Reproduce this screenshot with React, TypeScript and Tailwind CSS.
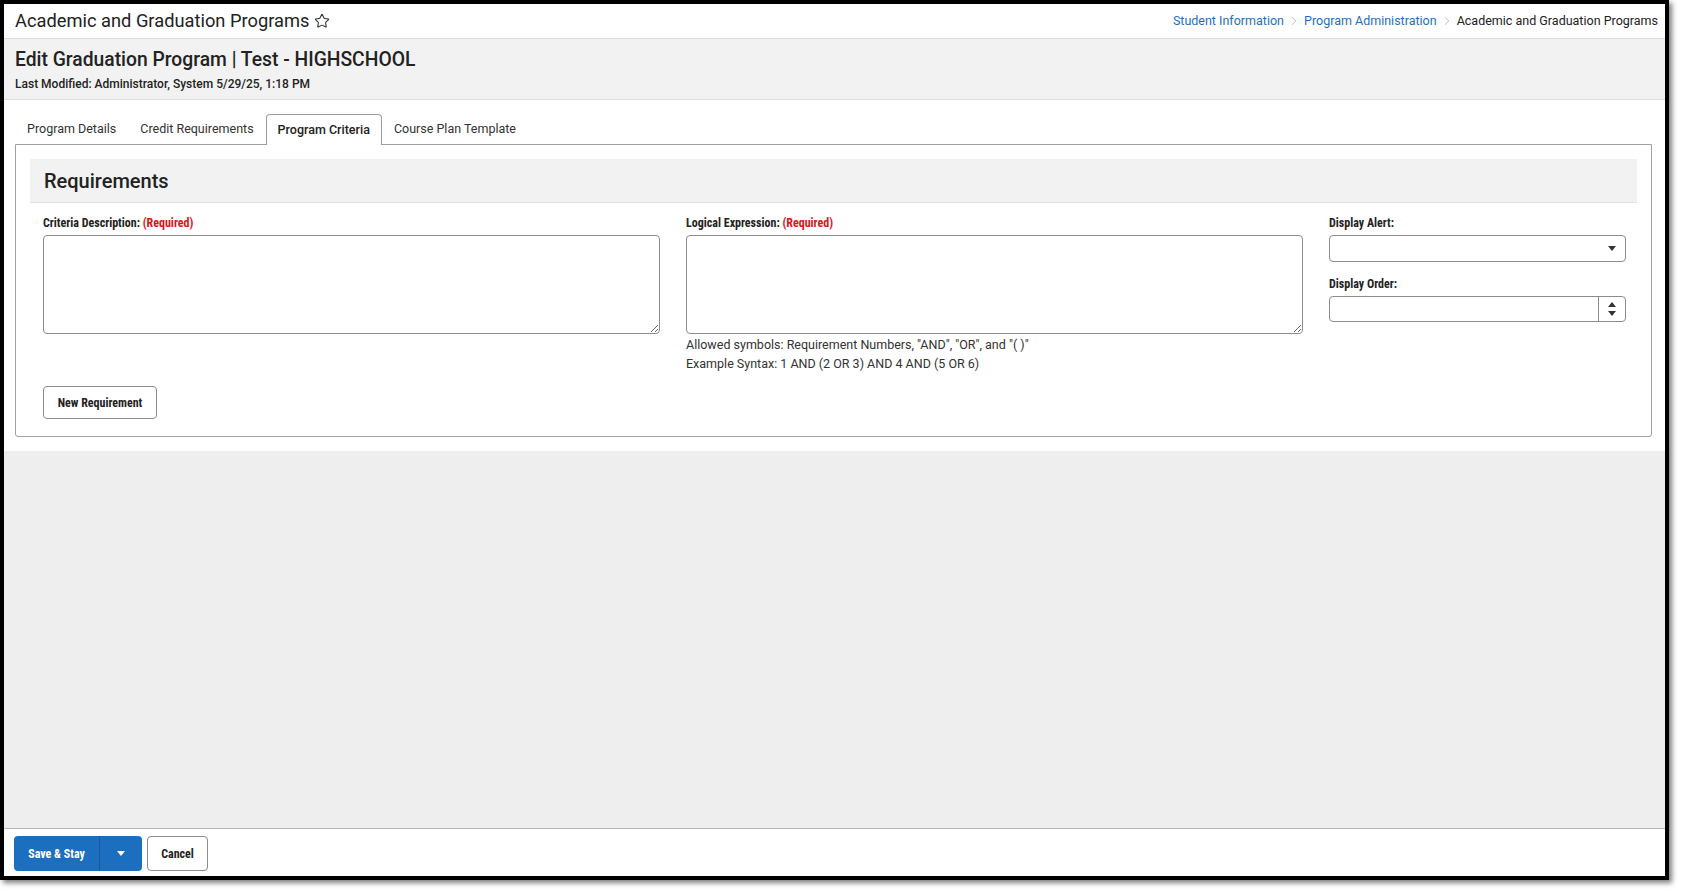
import React from "react";
import { Star, ChevronRight } from "lucide-react";

const cond = "[font-family:'Roboto_Condensed','Liberation_Sans_Narrow','Arial_Narrow',Roboto,sans-serif]";

function Label({ text, required }: { text: string; required?: boolean }) {
  return (
    <div className={`h-4 mb-1 text-[12px] leading-4 font-bold text-[#222] ${cond}`}>
      {text}
      {required && <span className="text-[#d7141a]"> (Required)</span>}
    </div>
  );
}

function Caret({ up, color = "#333" }: { up?: boolean; color?: string }) {
  return (
    <svg width="8" height="5" viewBox="0 0 8 5" className="block">
      {up ? <path d="M0 5 L4 0 L8 5 Z" fill={color} /> : <path d="M0 0 L8 0 L4 5 Z" fill={color} />}
    </svg>
  );
}

export default function App() {
  return (
    <div className="w-[1684px] h-[895px] bg-white overflow-hidden [font-family:Roboto,'Liberation_Sans',sans-serif] text-[#222]">
      <div className="w-[1669px] h-[880px] border-4 border-black shadow-[3px_3px_5px_rgba(0,0,0,0.5)] flex flex-col bg-white">
        {/* Header */}
        <div className="h-[35px] shrink-0 border-b border-[#dcdcdc] flex items-center justify-between pl-[11px] pr-[7px]">
          <div className="flex items-center">
            <span className="text-[18.3px] leading-[24px] text-[#222]">Academic and Graduation Programs</span>
            <Star size={16} strokeWidth={1.6} className="ml-[5px] text-[#333]" />
          </div>
          <div className="flex items-center text-[12.5px]">
            <span className="text-[#1d6fc2]">Student Information</span>
            <ChevronRight size={14} strokeWidth={1.5} className="mx-[3px] text-[#b0b0b0]" />
            <span className="text-[#1d6fc2]">Program Administration</span>
            <ChevronRight size={14} strokeWidth={1.5} className="mx-[3px] text-[#b0b0b0]" />
            <span className="text-[#222]">Academic and Graduation Programs</span>
          </div>
        </div>

        {/* Sub header */}
        <div className="h-[61px] shrink-0 border-b border-[#dedede] bg-[#f2f2f2] pl-[11px] pt-[9px]">
          <div className="text-[19.3px] leading-[24px] font-medium text-[#222]">Edit Graduation Program | Test - HIGHSCHOOL</div>
          <div className="mt-[4px] text-[12px] leading-[16px] font-medium text-[#222]">Last Modified: Administrator, System 5/29/25, 1:18 PM</div>
        </div>

        {/* Main */}
        <div className="shrink-0 bg-white pl-[11px] pr-[13px] pt-[14px] pb-[14px]">
          <div className="flex h-[30px] items-stretch text-[12.5px] text-[#333]">
            <div className="px-3 pt-px flex items-center">Program Details</div>
            <div className="px-3 pt-px flex items-center">Credit Requirements</div>
            <div className="px-[11px] pt-px flex items-center h-[31px] border border-b-0 border-[#9c9c9c] rounded-t-[4px] bg-white relative z-10 font-medium text-[#222]">Program Criteria</div>
            <div className="px-3 pt-px flex items-center">Course Plan Template</div>
          </div>
          <div className="border border-[#a0a0a0] rounded-b-[3px] px-[14px] pt-[14px] pb-[17px]">
            <div className="h-[44px] bg-[#f2f2f2] border-b border-[#e2e2e2] flex items-center px-[14px] text-[20px] font-medium text-[#222]">
              Requirements
            </div>
            <div className="pl-[13px] pr-[11px] pt-[12px]">
              <div className="grid grid-cols-[1fr_1fr_297px] gap-x-[26px] items-start">
                <div>
                  <Label text="Criteria Description:" required />
                  <textarea className="block w-full h-[99px] border border-[#8c8c8c] rounded-[4px] bg-white outline-none" />
                </div>
                <div>
                  <Label text="Logical Expression:" required />
                  <textarea className="block w-full h-[99px] border border-[#8c8c8c] rounded-[4px] bg-white outline-none" />
                  <div className="mt-px text-[12.5px] leading-[19px] text-[#333]">
                    <div>Allowed symbols: Requirement Numbers, "AND", "OR", and "( )"</div>
                    <div>Example Syntax: 1 AND (2 OR 3) AND 4 AND (5 OR 6)</div>
                  </div>
                </div>
                <div>
                  <Label text="Display Alert:" />
                  <div className="relative h-[27px] border border-[#8c8c8c] rounded-[4px] bg-white">
                    <div className="absolute right-[9px] top-[10px]">
                      <Caret />
                    </div>
                  </div>
                  <div className="mt-[14px]">
                    <Label text="Display Order:" />
                    <div className="flex h-[26px] border border-[#8c8c8c] rounded-[4px] bg-white">
                      <div className="flex-1" />
                      <div className="w-[27px] border-l border-[#8c8c8c] flex flex-col items-center justify-center gap-[4px]">
                        <Caret up />
                        <Caret />
                      </div>
                    </div>
                  </div>
                </div>
              </div>
              <button className={`mt-[13px] h-[33px] w-[114px] border border-[#8c8c8c] rounded-[4px] bg-white text-[12px] font-bold text-[#222] ${cond}`}>
                New Requirement
              </button>
            </div>
          </div>
        </div>

        {/* Empty gray */}
        <div className="flex-1 bg-[#eeeeee]" />

        {/* Footer */}
        <div className="h-[48px] shrink-0 border-t border-[#b5b5b5] bg-white flex items-start pt-[7px] pl-[10px] gap-[5px]">
          <div className="flex h-[35px] rounded-[4px] bg-[#1c6ebf] text-white">
            <div className={`w-[85px] flex items-center justify-center text-[12px] font-bold ${cond}`}>Save &amp; Stay</div>
            <div className="w-[43px] border-l border-[#15599c] flex items-center justify-center">
              <Caret color="#ffffff" />
            </div>
          </div>
          <div className={`w-[61px] h-[35px] border border-[#8c8c8c] rounded-[4px] bg-white flex items-center justify-center text-[12px] font-bold text-[#222] ${cond}`}>
            Cancel
          </div>
        </div>
      </div>
    </div>
  );
}
